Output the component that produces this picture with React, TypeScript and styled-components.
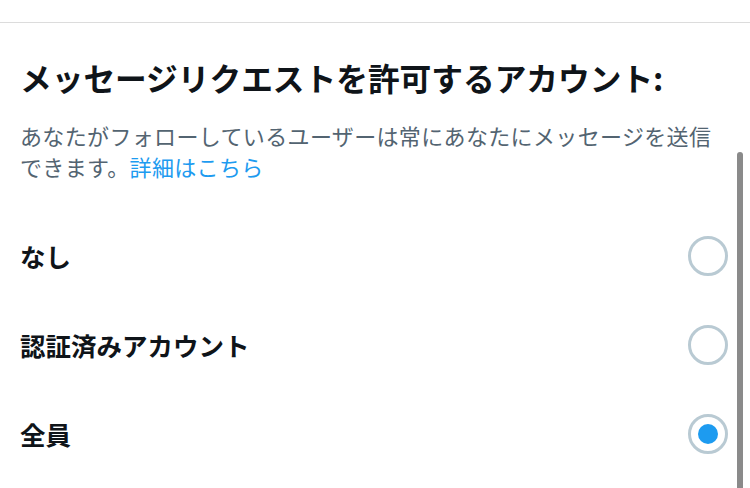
import React from "react";
import styled, { createGlobalStyle } from "styled-components";

const GlobalStyle = createGlobalStyle`
  html, body {
    margin: 0;
    padding: 0;
    background: #ffffff;
  }
  body {
    font-family: "Noto Sans CJK JP", "Noto Sans", sans-serif;
    color: #0f1419;
  }
`;

const Page = styled.div`
  position: relative;
  width: 750px;
  height: 488px;
  overflow: hidden;
  background: #ffffff;
`;

const TopBar = styled.div`
  height: 22px;
  border-bottom: 1px solid #dcdcdc;
`;

const Header = styled.div`
  padding: 34px 20px 0 20px;
`;

const Title = styled.h2`
  margin: 0;
  font-size: 31.7px;
  font-weight: 700;
  line-height: 40px;
  white-space: nowrap;
`;

const Description = styled.p`
  margin: 23px 0 0 0;
  font-size: 22px;
  letter-spacing: 0.35px;
  line-height: 31px;
  color: #536471;
`;

const Link = styled.a`
  color: #1d9bf0;
  text-decoration: none;
`;

const Options = styled.div`
  display: flex;
  flex-direction: column;
  margin-top: 29px;
`;

const Option = styled.label`
  display: flex;
  align-items: center;
  justify-content: space-between;
  height: 89px;
  padding: 0 22px 0 20px;
  cursor: pointer;
`;

const OptionLabel = styled.span`
  font-size: 25.5px;
  font-weight: 700;
`;

const Radio = styled.span<{ $checked: boolean }>`
  display: flex;
  align-items: center;
  justify-content: center;
  width: 40px;
  height: 40px;
  box-sizing: border-box;
  border-radius: 50%;
  border: 3px solid #b9cad3;

  &::after {
    content: "";
    width: 20px;
    height: 20px;
    border-radius: 50%;
    background: #1d9bf0;
    display: ${(p) => (p.$checked ? "block" : "none")};
  }
`;

const ScrollThumb = styled.div`
  position: absolute;
  right: 7px;
  top: 152px;
  width: 6px;
  height: 360px;
  border-radius: 3px;
  background: #8a8a8a;
`;

const options = [
  { id: "none", label: "なし" },
  { id: "verified", label: "認証済みアカウント" },
  { id: "everyone", label: "全員" },
];

const App: React.FC = () => {
  const selected = "everyone";

  return (
    <>
      <GlobalStyle />
      <Page>
        <TopBar />
        <Header>
          <Title>メッセージリクエストを許可するアカウント:</Title>
          <Description>
            あなたがフォローしているユーザーは常にあなたにメッセージを送信できます。
            <Link href="#">詳細はこちら</Link>
          </Description>
        </Header>
        <Options>
          {options.map((o) => (
            <Option key={o.id}>
              <OptionLabel>{o.label}</OptionLabel>
              <Radio $checked={o.id === selected} />
            </Option>
          ))}
        </Options>
        <ScrollThumb />
      </Page>
    </>
  );
};

export default App;
